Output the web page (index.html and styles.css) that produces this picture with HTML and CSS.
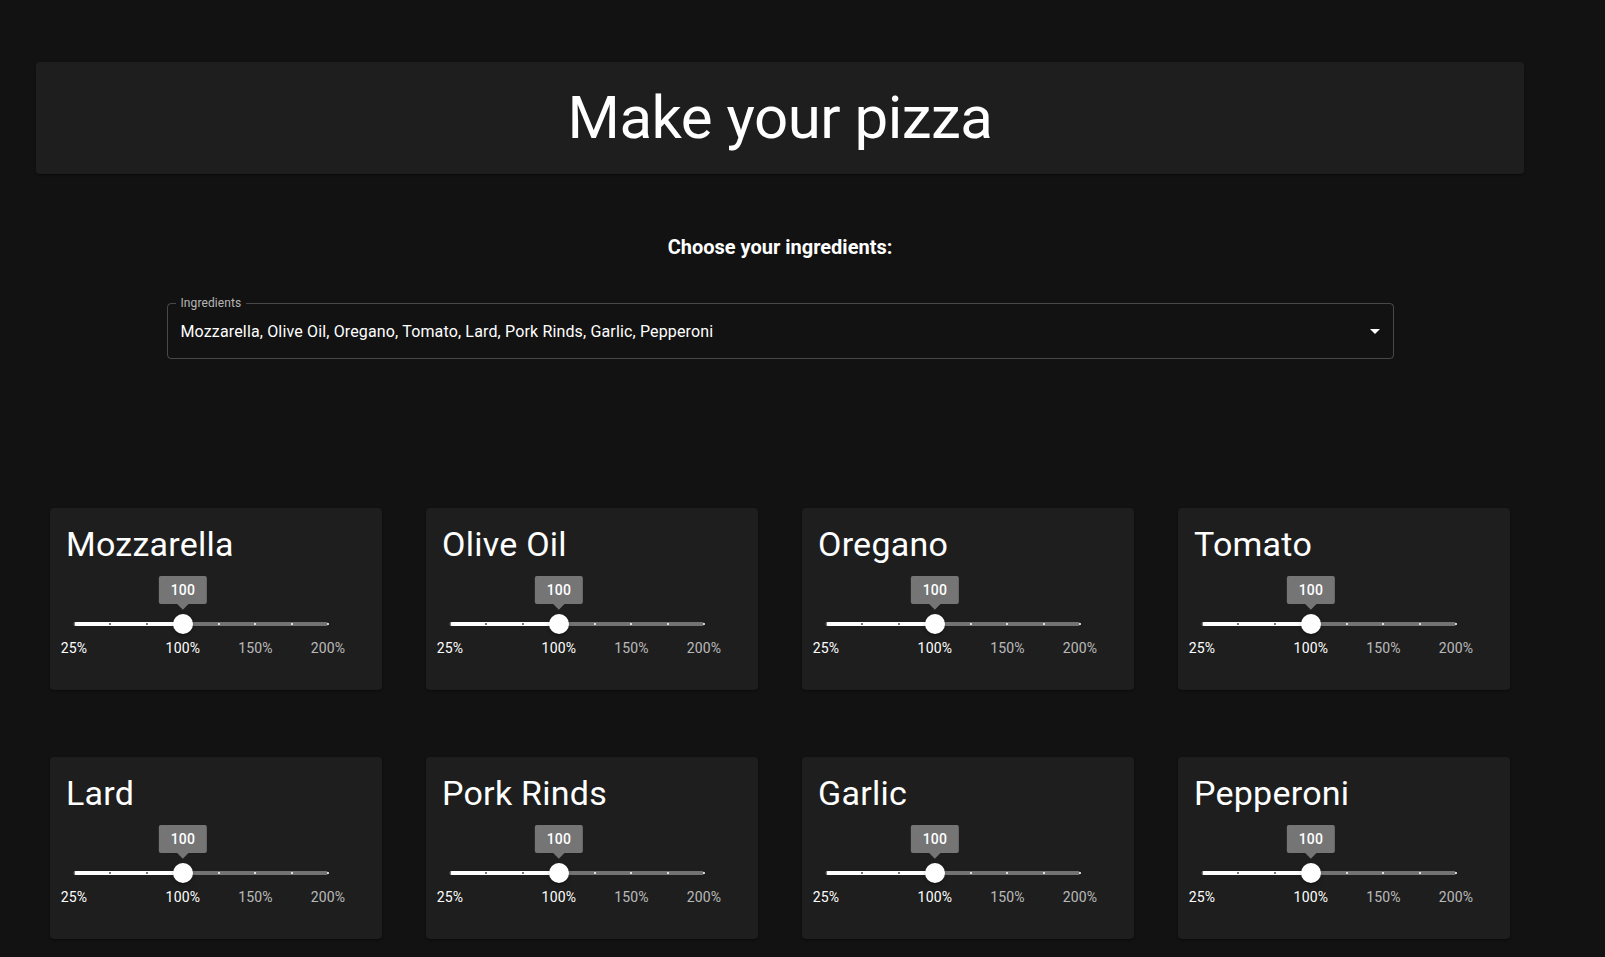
FILE: index.html
```html
<!DOCTYPE html>
<html lang="en">
<head>
<meta charset="utf-8">
<title>Make your pizza</title>
<link rel="stylesheet" href="styles.css">
</head>
<body>
<div class="page">
  <header class="header">
    <h1 class="title">Make your pizza</h1>
  </header>

  <h2 class="subtitle">Choose your ingredients:</h2>

  <div class="select">
    <span class="select-value">Mozzarella, Olive Oil, Oregano, Tomato, Lard, Pork Rinds, Garlic, Pepperoni</span>
    <svg class="select-icon" viewBox="0 0 24 24" width="24" height="24" aria-hidden="true"><path d="M7 10l5 5 5-5z" fill="#fff"/></svg>
    <fieldset class="outline"><legend class="outline-label">Ingredients</legend></fieldset>
  </div>

  <div class="grid">
    <div class="card">
      <div class="card-title">Mozzarella</div>
      <div class="slider">
        <div class="rail"></div>
        <div class="track" style="width:42.857%"></div>
        <span class="mark active" style="left:0%"></span>
        <span class="mark active" style="left:14.286%"></span>
        <span class="mark active" style="left:28.571%"></span>
        <span class="mark" style="left:57.143%"></span>
        <span class="mark" style="left:71.429%"></span>
        <span class="mark" style="left:85.714%"></span>
        <span class="mark" style="left:100%"></span>
        <span class="mark-label active" style="left:0%">25%</span>
        <span class="mark-label active" style="left:42.857%">100%</span>
        <span class="mark-label" style="left:71.429%">150%</span>
        <span class="mark-label" style="left:100%">200%</span>
        <span class="thumb" style="left:42.857%"><span class="value-label">100</span></span>
      </div>
    </div>
    <div class="card">
      <div class="card-title">Olive Oil</div>
      <div class="slider">
        <div class="rail"></div>
        <div class="track" style="width:42.857%"></div>
        <span class="mark active" style="left:0%"></span>
        <span class="mark active" style="left:14.286%"></span>
        <span class="mark active" style="left:28.571%"></span>
        <span class="mark" style="left:57.143%"></span>
        <span class="mark" style="left:71.429%"></span>
        <span class="mark" style="left:85.714%"></span>
        <span class="mark" style="left:100%"></span>
        <span class="mark-label active" style="left:0%">25%</span>
        <span class="mark-label active" style="left:42.857%">100%</span>
        <span class="mark-label" style="left:71.429%">150%</span>
        <span class="mark-label" style="left:100%">200%</span>
        <span class="thumb" style="left:42.857%"><span class="value-label">100</span></span>
      </div>
    </div>
    <div class="card">
      <div class="card-title">Oregano</div>
      <div class="slider">
        <div class="rail"></div>
        <div class="track" style="width:42.857%"></div>
        <span class="mark active" style="left:0%"></span>
        <span class="mark active" style="left:14.286%"></span>
        <span class="mark active" style="left:28.571%"></span>
        <span class="mark" style="left:57.143%"></span>
        <span class="mark" style="left:71.429%"></span>
        <span class="mark" style="left:85.714%"></span>
        <span class="mark" style="left:100%"></span>
        <span class="mark-label active" style="left:0%">25%</span>
        <span class="mark-label active" style="left:42.857%">100%</span>
        <span class="mark-label" style="left:71.429%">150%</span>
        <span class="mark-label" style="left:100%">200%</span>
        <span class="thumb" style="left:42.857%"><span class="value-label">100</span></span>
      </div>
    </div>
    <div class="card">
      <div class="card-title">Tomato</div>
      <div class="slider">
        <div class="rail"></div>
        <div class="track" style="width:42.857%"></div>
        <span class="mark active" style="left:0%"></span>
        <span class="mark active" style="left:14.286%"></span>
        <span class="mark active" style="left:28.571%"></span>
        <span class="mark" style="left:57.143%"></span>
        <span class="mark" style="left:71.429%"></span>
        <span class="mark" style="left:85.714%"></span>
        <span class="mark" style="left:100%"></span>
        <span class="mark-label active" style="left:0%">25%</span>
        <span class="mark-label active" style="left:42.857%">100%</span>
        <span class="mark-label" style="left:71.429%">150%</span>
        <span class="mark-label" style="left:100%">200%</span>
        <span class="thumb" style="left:42.857%"><span class="value-label">100</span></span>
      </div>
    </div>
    <div class="card">
      <div class="card-title">Lard</div>
      <div class="slider">
        <div class="rail"></div>
        <div class="track" style="width:42.857%"></div>
        <span class="mark active" style="left:0%"></span>
        <span class="mark active" style="left:14.286%"></span>
        <span class="mark active" style="left:28.571%"></span>
        <span class="mark" style="left:57.143%"></span>
        <span class="mark" style="left:71.429%"></span>
        <span class="mark" style="left:85.714%"></span>
        <span class="mark" style="left:100%"></span>
        <span class="mark-label active" style="left:0%">25%</span>
        <span class="mark-label active" style="left:42.857%">100%</span>
        <span class="mark-label" style="left:71.429%">150%</span>
        <span class="mark-label" style="left:100%">200%</span>
        <span class="thumb" style="left:42.857%"><span class="value-label">100</span></span>
      </div>
    </div>
    <div class="card">
      <div class="card-title">Pork Rinds</div>
      <div class="slider">
        <div class="rail"></div>
        <div class="track" style="width:42.857%"></div>
        <span class="mark active" style="left:0%"></span>
        <span class="mark active" style="left:14.286%"></span>
        <span class="mark active" style="left:28.571%"></span>
        <span class="mark" style="left:57.143%"></span>
        <span class="mark" style="left:71.429%"></span>
        <span class="mark" style="left:85.714%"></span>
        <span class="mark" style="left:100%"></span>
        <span class="mark-label active" style="left:0%">25%</span>
        <span class="mark-label active" style="left:42.857%">100%</span>
        <span class="mark-label" style="left:71.429%">150%</span>
        <span class="mark-label" style="left:100%">200%</span>
        <span class="thumb" style="left:42.857%"><span class="value-label">100</span></span>
      </div>
    </div>
    <div class="card">
      <div class="card-title">Garlic</div>
      <div class="slider">
        <div class="rail"></div>
        <div class="track" style="width:42.857%"></div>
        <span class="mark active" style="left:0%"></span>
        <span class="mark active" style="left:14.286%"></span>
        <span class="mark active" style="left:28.571%"></span>
        <span class="mark" style="left:57.143%"></span>
        <span class="mark" style="left:71.429%"></span>
        <span class="mark" style="left:85.714%"></span>
        <span class="mark" style="left:100%"></span>
        <span class="mark-label active" style="left:0%">25%</span>
        <span class="mark-label active" style="left:42.857%">100%</span>
        <span class="mark-label" style="left:71.429%">150%</span>
        <span class="mark-label" style="left:100%">200%</span>
        <span class="thumb" style="left:42.857%"><span class="value-label">100</span></span>
      </div>
    </div>
    <div class="card">
      <div class="card-title">Pepperoni</div>
      <div class="slider">
        <div class="rail"></div>
        <div class="track" style="width:42.857%"></div>
        <span class="mark active" style="left:0%"></span>
        <span class="mark active" style="left:14.286%"></span>
        <span class="mark active" style="left:28.571%"></span>
        <span class="mark" style="left:57.143%"></span>
        <span class="mark" style="left:71.429%"></span>
        <span class="mark" style="left:85.714%"></span>
        <span class="mark" style="left:100%"></span>
        <span class="mark-label active" style="left:0%">25%</span>
        <span class="mark-label active" style="left:42.857%">100%</span>
        <span class="mark-label" style="left:71.429%">150%</span>
        <span class="mark-label" style="left:100%">200%</span>
        <span class="thumb" style="left:42.857%"><span class="value-label">100</span></span>
      </div>
    </div>
  </div>
</div>
</body>
</html>
```

FILE: styles.css
```css
html, body {
  margin: 0;
  padding: 0;
  background: #121212;
  color: #fff;
  font-family: Roboto, "Liberation Sans", Arial, sans-serif;
}

.page {
  width: 1488px;
  margin-left: 36px;
  padding-top: 62px;
  padding-bottom: 40px;
}

.header {
  height: 112px;
  box-sizing: border-box;
  background: #1e1e1e;
  border-radius: 4px;
  box-shadow: 0 2px 1px -1px rgba(0,0,0,0.2), 0 1px 1px 0 rgba(0,0,0,0.14), 0 1px 3px 0 rgba(0,0,0,0.12);
  display: flex;
  align-items: center;
  justify-content: center;
}

.title {
  margin: 0;
  font-size: 60px;
  font-weight: 400;
  line-height: 1.2;
  letter-spacing: -0.5px;
}

.subtitle {
  margin: 58px 0 0;
  text-align: center;
  font-size: 20px;
  font-weight: 700;
  line-height: 30px;
}

.select {
  position: relative;
  width: 1227px;
  height: 56px;
  margin: 41px auto 0;
  box-sizing: border-box;
  padding: 0 32px 0 14px;
  display: flex;
  align-items: center;
  font-size: 16px;
  letter-spacing: 0.15px;
}

.select-value {
  white-space: nowrap;
  line-height: 23px;
}

.select-icon {
  position: absolute;
  right: 7px;
  top: 16px;
}

.outline {
  position: absolute;
  top: -5px;
  left: 0;
  right: 0;
  bottom: 0;
  margin: 0;
  padding: 0 8px;
  border: 1px solid rgba(255,255,255,0.23);
  border-radius: 4px;
  pointer-events: none;
}

.outline-label {
  padding: 0 5px;
  font-size: 12px;
  line-height: 11px;
  height: 11px;
  letter-spacing: 0.1px;
  color: rgba(255,255,255,0.7);
}

.grid {
  display: grid;
  grid-template-columns: repeat(4, 332px);
  column-gap: 44px;
  row-gap: 67px;
  padding: 0 14px;
  margin-top: 149px;
}

.card {
  height: 182px;
  box-sizing: border-box;
  padding: 16px;
  background: #1e1e1e;
  border-radius: 4px;
  box-shadow: 0 2px 1px -1px rgba(0,0,0,0.2), 0 1px 1px 0 rgba(0,0,0,0.14), 0 1px 3px 0 rgba(0,0,0,0.12);
}

.card-title {
  font-size: 34px;
  line-height: 41px;
  font-weight: 400;
  letter-spacing: 0.25px;
}

.slider {
  position: relative;
  width: 254px;
  height: 4px;
  margin: 57px 0 0 8px;
}

.rail {
  position: absolute;
  inset: 0;
  border-radius: 2px;
  background: #737373;
}

.track {
  position: absolute;
  left: 0;
  top: 0;
  height: 4px;
  border-radius: 2px;
  background: #fff;
}

.mark {
  position: absolute;
  top: 1px;
  width: 2px;
  height: 2px;
  border-radius: 1px;
  transform: translateX(-1px);
  background: #fff;
}

.mark.active {
  background: #4a4a4a;
}

.mark-label {
  position: absolute;
  top: 16px;
  transform: translateX(-50%);
  font-size: 14px;
  line-height: 20px;
  letter-spacing: 0.15px;
  white-space: nowrap;
  color: rgba(255,255,255,0.7);
}

.mark-label.active {
  color: #fff;
}

.thumb {
  position: absolute;
  top: 2px;
  width: 20px;
  height: 20px;
  border-radius: 50%;
  background: #fff;
  transform: translate(-50%, -50%);
  box-shadow: 0 3px 1px -2px rgba(0,0,0,0.2), 0 2px 2px 0 rgba(0,0,0,0.14), 0 1px 5px 0 rgba(0,0,0,0.12);
}

.value-label {
  position: absolute;
  bottom: calc(100% + 10px);
  left: 50%;
  transform: translateX(-50%);
  padding: 4px 12px;
  border-radius: 2px;
  background: #757575;
  color: #fff;
  font-size: 14px;
  font-weight: 500;
  line-height: 20px;
  letter-spacing: 0.15px;
  white-space: nowrap;
}

.value-label::before {
  content: "";
  position: absolute;
  left: 50%;
  bottom: 0;
  width: 8px;
  height: 8px;
  background: #757575;
  transform: translate(-50%, 50%) rotate(45deg);
}
```
